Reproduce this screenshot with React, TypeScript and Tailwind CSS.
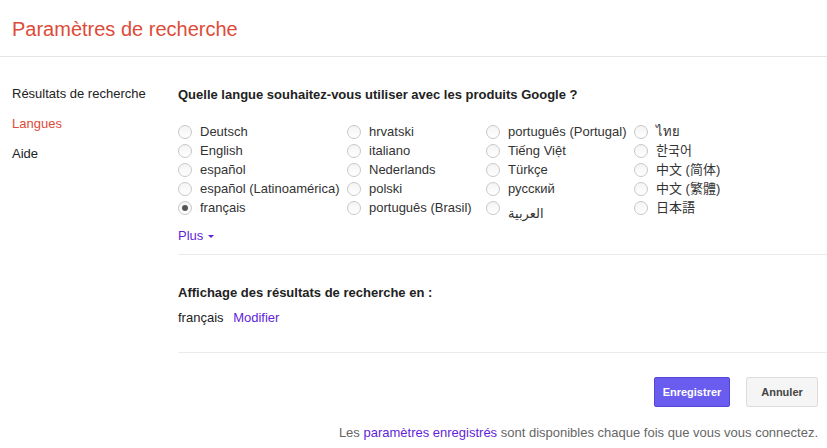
const LANGS: { label: string; font?: string; low?: boolean }[][] = [
  [
    { label: 'Deutsch' },
    { label: 'English' },
    { label: 'español' },
    { label: 'español (Latinoamérica)' },
    { label: 'français' },
  ],
  [
    { label: 'hrvatski' },
    { label: 'italiano' },
    { label: 'Nederlands' },
    { label: 'polski' },
    { label: 'português (Brasil)' },
  ],
  [
    { label: 'português (Portugal)' },
    { label: 'Tiếng Việt' },
    { label: 'Türkçe' },
    { label: 'русский' },
    { label: 'العربية', low: true },
  ],
  [
    { label: 'ไทย' },
    { label: '한국어', font: "'Liberation Sans','Noto Sans CJK KR',sans-serif" },
    { label: '中文 (简体)', font: "'Liberation Sans','Noto Sans CJK SC',sans-serif" },
    { label: '中文 (繁體)', font: "'Liberation Sans','Noto Sans CJK TC',sans-serif" },
    { label: '日本語', font: "'Liberation Sans','Noto Sans CJK JP',sans-serif" },
  ],
];

const COL_WIDTHS = ['w-[169px]', 'w-[139px]', 'w-[148px]', 'w-[150px]'];

function Radio({ checked }: { checked?: boolean }) {
  return (
    <span className="w-[14px] h-[14px] shrink-0 rounded-full border border-[#c8c8c8] bg-gradient-to-b from-[#f4f4f4] to-white flex items-center justify-center">
      {checked && <span className="w-[6px] h-[6px] rounded-full bg-[#555]" />}
    </span>
  );
}

export default function App() {
  return (
    <div
      className="w-[827px] h-[448px] bg-white text-[#222] text-[13px] overflow-hidden"
      style={{ fontFamily: "'Liberation Sans', 'DejaVu Sans', 'Noto Sans CJK SC', sans-serif" }}
    >
      <div className="h-[57px] border-b border-[#e5e5e5] flex items-center px-3 pt-[2px]">
        <h1 className="text-[20px] text-[#dd4b39] leading-6">Paramètres de recherche</h1>
      </div>

      <div className="flex">
        <nav className="w-[178px] shrink-0 pt-[22px] pl-3">
          <div className="h-[30px] leading-[30px]">Résultats de recherche</div>
          <div className="h-[30px] leading-[30px] text-[#dd4b39]">Langues</div>
          <div className="h-[30px] leading-[30px]">Aide</div>
        </nav>

        <main className="flex-1 pt-[30px]">
          <h2 className="font-bold leading-4">Quelle langue souhaitez-vous utiliser avec les produits Google ?</h2>

          <div className="flex mt-[19px]">
            {LANGS.map((col, ci) => (
              <div key={ci} className={COL_WIDTHS[ci]}>
                {col.map((lang) => (
                  <label key={lang.label} className="flex items-center h-[19px] gap-2 text-[#333] whitespace-nowrap">
                    <Radio checked={lang.label === 'français'} />
                    <span
                      className={lang.low ? 'relative top-[6px]' : ''}
                      style={lang.font ? { fontFamily: lang.font } : undefined}
                    >
                      {lang.label}
                    </span>
                  </label>
                ))}
              </div>
            ))}
          </div>

          <div className="mt-[11px] leading-4 text-[#5f1fd9] flex items-center gap-[5px]">
            Plus
            <span className="w-0 h-0 border-l-[3px] border-r-[3px] border-t-[3px] border-l-transparent border-r-transparent border-t-[#5f1fd9]" />
          </div>

          <div className="mt-[10px] border-t border-[#ebebeb]" />

          <h2 className="pt-[30px] font-bold leading-4">Affichage des résultats de recherche en :</h2>
          <div className="mt-[9px] leading-4">
            français <span className="ml-[6px] text-[#5f1fd9]">Modifier</span>
          </div>

          <div className="mt-[26px] border-t border-[#ebebeb]" />

          <div className="pr-[9px]">
            <div className="mt-[24px] flex justify-end gap-4">
              <button className="w-[76px] h-[30px] rounded-[2px] border border-[#5546d8] bg-[#6b5cf0] text-white text-[11px] font-bold">
                Enregistrer
              </button>
              <button className="w-[72px] h-[30px] rounded-[2px] border border-[#dcdcdc] bg-[#f5f5f5] text-[#444] text-[11px] font-bold">
                Annuler
              </button>
            </div>
            <p className="mt-[18px] leading-4 text-right text-[#666]">
              Les <span className="text-[#5f1fd9]">paramètres enregistrés</span> sont disponibles chaque fois que vous vous connectez.
            </p>
          </div>
        </main>
      </div>
    </div>
  );
}
